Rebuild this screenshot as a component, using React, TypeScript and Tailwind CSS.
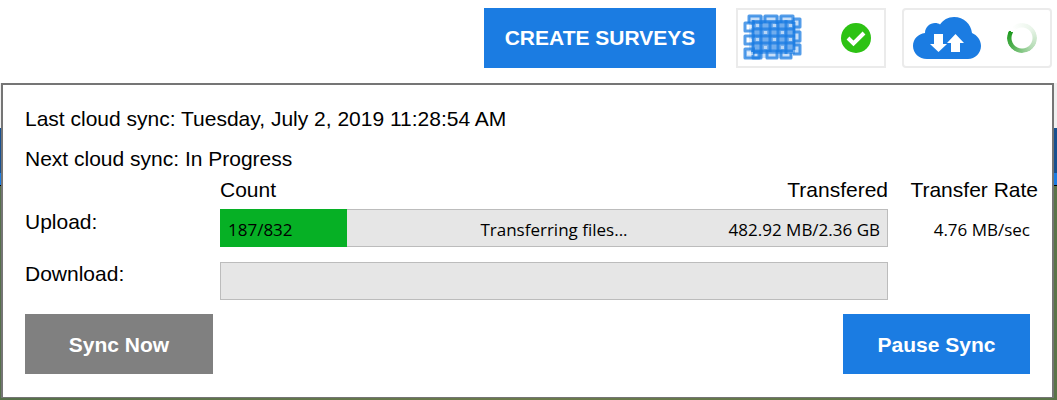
import React from 'react';

interface ProgressBarProps {
  id: string;
  value: number;
  max: number;
  count?: string;
  status?: string;
  transfered?: string;
}

const WeaveIcon: React.FC = () => (
  <svg width="60" height="48" viewBox="0 0 60 48" fill="none" stroke="#1b7ce2" aria-hidden="true">
    <path d="M6 2h43v4h8v34h-8v4H2v-8h4z" fill="#1b7ce2" fillOpacity="0.25" stroke="none" />
    <rect x="9" y="6" width="43" height="34" fill="#1b7ce2" fillOpacity="0.5" stroke="none" />
    <g strokeWidth="3" strokeOpacity="0.75" strokeLinejoin="round">
      <path d="M6 9V2h12v8M22 9V2h12v8M38 9V2h12v8" />
      <path d="M10 38v6h8v-8M24 36v8h10v-8M38 36v8h10v-5" />
      <path d="M50 5h7v8h-7M50 18h7v9h-7M50 31h7v9h-7" />
      <path d="M12 9H2v8h9M12 22H2v8h9M12 35H2v9h14v-6H8" />
      <path d="M10 8h40M10 15h42M10 22h42M10 29h42M10 37h40" />
      <path d="M10 6v34M18 8v32M27 8v30M35 8v30M43 6v34M51 8v28" />
    </g>
    <g fill="#fff" fillOpacity="0.5" stroke="none">
      <rect x="4" y="11" width="5" height="3" />
      <rect x="4" y="25" width="5" height="3" />
      <rect x="4" y="38" width="6" height="3" />
      <rect x="13" y="10" width="3" height="3" />
      <rect x="30" y="10" width="3" height="3" />
      <rect x="46" y="10" width="3" height="3" />
      <rect x="21" y="17" width="3" height="3" />
      <rect x="38" y="17" width="3" height="3" />
      <rect x="13" y="24" width="3" height="3" />
      <rect x="30" y="24" width="3" height="3" />
      <rect x="46" y="24" width="3" height="3" />
      <rect x="21" y="32" width="3" height="3" />
      <rect x="38" y="32" width="3" height="3" />
    </g>
  </svg>
);

const CheckIcon: React.FC = () => (
  <svg width="32" height="32" viewBox="0 0 32 32" aria-hidden="true">
    <circle cx="16" cy="16" r="15" fill="#2dc214" />
    <path d="M8 16l5.500 5.500L24 11" fill="none" stroke="#fff" strokeWidth="4" />
  </svg>
);

const CloudIcon: React.FC = () => (
  <svg width="70" height="44" viewBox="0 0 70 44" aria-hidden="true">
    <path
      d="M15 43C7 43 1 37 1 30c0-7 5-12 12-13 0-6 5-10 10-10 2 0 4 .5 5 1.500C31 4 36 1 42 1c10 0 17 7 18 16 5 2 9 7 9 13 0 7-6 13-13 13z"
      fill="#1b7ce2"
    />
    <path d="M22 18h9v10h4l-8.500 8-8.500-8h4z" fill="#fff" />
    <path d="M39 36h9V27h4l-8.500-9-8.500 9h4z" fill="#fff" />
  </svg>
);

const Spinner: React.FC = () => (
  <span className="block size-8 p-px">
    <span className="block size-full rounded-full bg-[conic-gradient(from_315deg,#ffffff_0deg,#eaf5ea_90deg,#b5dcb5_180deg,#55b255_270deg,#1c991c_345deg,#ffffff_346deg)] mask-[radial-gradient(circle,transparent_10px,black_11px)]" />
  </span>
);

const ProgressBar: React.FC<ProgressBarProps> = ({ id, value, max, count, status, transfered }) => (
  <div
    role="progressbar"
    aria-labelledby={id}
    aria-valuenow={value}
    aria-valuemax={max}
    className="relative h-[38px] border border-[#bcbcbc] bg-[#e6e6e6] font-['Open_Sans',sans-serif] text-[17px]"
  >
    {value > 0 && (
      <div className="absolute -inset-y-px -left-px bg-[#06b025]" style={{ width: `${(value / max) * 85}%` }} />
    )}
    <div className="relative grid h-full grid-cols-3 items-center px-[7px] pt-1">
      <span>{count}</span>
      <span className="text-center">{status}</span>
      <span className="whitespace-nowrap text-right">{transfered}</span>
    </div>
  </div>
);

const Header: React.FC = () => (
  <header className="flex h-32 items-start justify-end bg-[linear-gradient(#fff_83px,#f0f0f0_83px)] pr-[5px] pt-2">
    <button className="h-[60px] w-[232px] bg-[#1b7ce2] text-[21px] font-bold text-white">CREATE SURVEYS</button>
    <button
      aria-label="Local sync"
      className="ml-5 flex h-[60px] w-[150px] items-center justify-between border-2 border-[#ebebeb] px-[5px] pr-3"
    >
      <WeaveIcon />
      <CheckIcon />
    </button>
    <button
      aria-label="Cloud sync"
      className="ml-4 flex h-[60px] w-[150px] items-center justify-between rounded border-2 border-[#ebebeb] pl-2 pr-3"
    >
      <CloudIcon />
      <Spinner />
    </button>
  </header>
);

const SyncPanel: React.FC = () => (
  <section className="absolute left-px right-[3px] top-[83px] border-2 border-b border-[#757575] bg-white px-[22px] pb-[23px] pt-[22px]">
    <p className="leading-6">Last cloud sync: Tuesday, July 2, 2019 11:28:54 AM</p>
    <p className="mt-4 leading-6">Next cloud sync: In Progress</p>

    <div className="-mr-2 mt-[7px] grid grid-cols-[195px_1fr_150px] leading-6">
      <div className="col-start-2 flex justify-between">
        <span>Count</span>
        <span>Transfered</span>
      </div>
      <span className="text-right">Transfer Rate</span>
    </div>

    <div className="mt-[7px] grid grid-cols-[195px_1fr_142px] leading-[26px]">
      <span id="upload">Upload:</span>
      <ProgressBar
        id="upload"
        value={187}
        max={832}
        count="187/832"
        status="Transferring files..."
        transfered="482.92 MB/2.36 GB"
      />
      <span className="self-center pt-1 text-right font-['Open_Sans',sans-serif] text-[17px]">4.76 MB/sec</span>
    </div>

    <div className="mt-[15px] grid grid-cols-[195px_1fr_142px] leading-6">
      <span id="download">Download:</span>
      <ProgressBar id="download" value={0} max={832} />
    </div>

    <div className="mt-[14px] flex justify-between font-bold text-white">
      <button className="h-[60px] w-[188px] bg-[#808080] pt-[2px]">Sync Now</button>
      <button className="h-[60px] w-[187px] bg-[#1b7ce2] pt-[2px]">Pause Sync</button>
    </div>
  </section>
);

export default function App() {
  return (
    <div className="relative flex min-h-screen flex-col bg-white font-['Liberation_Sans',Arial,sans-serif] text-[21px] leading-7 text-black">
      <Header />
      <div className="h-[45px] bg-[#17508f]" />
      <div className="h-3 bg-[#1b7ce2]" />
      <main className="grow border-t border-black bg-linear-to-r from-[#56704a] via-[#6b7a4c] to-[#5a7448]" />
      <SyncPanel />
    </div>
  );
}
